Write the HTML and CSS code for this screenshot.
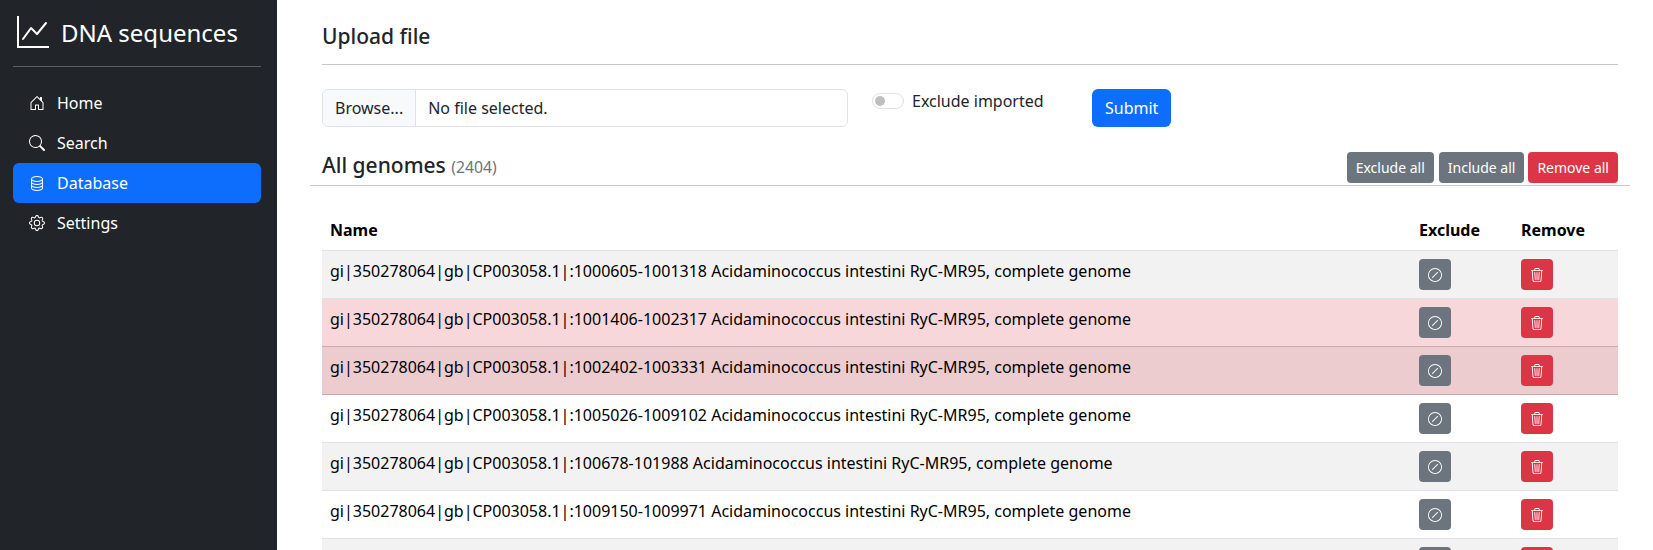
FILE: index.html
```html
<!DOCTYPE html>
<html lang="en">
<head>
    <meta charset="UTF-8">
    <title>DNA sequences</title>
    <link rel="stylesheet" href="styles.css">
</head>
<body>
    <div class="layout">
        <aside class="sidebar">
            <div class="brand">
                <svg class="brand-icon" viewBox="0 0 16 16" fill="currentColor"><path fill-rule="evenodd" d="M0 0h1v15h15v1H0V0Zm14.817 3.113a.5.5 0 0 1 .07.704l-4.5 5.5a.5.5 0 0 1-.74.037L7.06 6.767l-3.656 5.027a.5.5 0 0 1-.808-.588l4-5.5a.5.5 0 0 1 .758-.06l2.609 2.61 4.15-5.073a.5.5 0 0 1 .704-.07Z"/></svg>
                <span class="brand-name">DNA sequences</span>
            </div>
            <hr class="sidebar-rule">
            <nav class="nav">
                <a class="nav-link" href="#">
                    <svg class="nav-icon" viewBox="0 0 16 16" fill="currentColor"><path d="M8.354 1.146a.5.5 0 0 0-.708 0l-6 6A.5.5 0 0 0 1.5 7.5v7a.5.5 0 0 0 .5.5h4.5a.5.5 0 0 0 .5-.5v-4h2v4a.5.5 0 0 0 .5.5H14a.5.5 0 0 0 .5-.5v-7a.5.5 0 0 0-.146-.354L13 5.793V2.5a.5.5 0 0 0-.5-.5h-1a.5.5 0 0 0-.5.5v1.293L8.354 1.146zM2.5 14V7.707l5.5-5.5 5.5 5.5V14H10v-4a.5.5 0 0 0-.5-.5h-3a.5.5 0 0 0-.5.5v4H2.5z"/></svg>
                    Home
                </a>
                <a class="nav-link" href="#">
                    <svg class="nav-icon" viewBox="0 0 16 16" fill="currentColor"><path d="M11.742 10.344a6.5 6.5 0 1 0-1.397 1.398h-.001c.03.04.062.078.098.115l3.85 3.85a1 1 0 0 0 1.415-1.414l-3.85-3.85a1.007 1.007 0 0 0-.115-.1zM12 6.5a5.5 5.5 0 1 1-11 0 5.5 5.5 0 0 1 11 0z"/></svg>
                    Search
                </a>
                <a class="nav-link active" href="#">
                    <svg class="nav-icon" viewBox="0 0 16 16" fill="currentColor"><path d="M4.318 2.687C5.234 2.271 6.536 2 8 2s2.766.27 3.682.687C12.644 3.125 13 3.627 13 4c0 .374-.356.875-1.318 1.313C10.766 5.729 9.464 6 8 6s-2.766-.27-3.682-.687C3.356 4.875 3 4.373 3 4c0-.374.356-.875 1.318-1.313ZM13 5.698V7c0 .374-.356.875-1.318 1.313C10.766 8.729 9.464 9 8 9s-2.766-.27-3.682-.687C3.356 7.875 3 7.373 3 7V5.698c.271.202.58.378.904.525C4.978 6.711 6.427 7 8 7s3.022-.289 4.096-.777A4.92 4.92 0 0 0 13 5.698ZM14 4c0-1.007-.875-1.755-1.904-2.223C11.022 1.289 9.573 1 8 1s-3.022.289-4.096.777C2.875 2.245 2 2.993 2 4v9c0 1.007.875 1.755 1.904 2.223C4.978 15.711 6.427 16 8 16s3.022-.289 4.096-.777C13.125 14.755 14 14.007 14 13V4Zm-1 4.698V10c0 .374-.356.875-1.318 1.313C10.766 11.729 9.464 12 8 12s-2.766-.27-3.682-.687C3.356 10.875 3 10.373 3 10V8.698c.271.202.58.378.904.525C4.978 9.71 6.427 10 8 10s3.022-.289 4.096-.777A4.92 4.92 0 0 0 13 8.698Zm0 3V13c0 .374-.356.875-1.318 1.313C10.766 14.729 9.464 15 8 15s-2.766-.27-3.682-.687C3.356 13.875 3 13.373 3 13v-1.302c.271.202.58.378.904.525C4.978 12.71 6.427 13 8 13s3.022-.289 4.096-.777c.324-.147.633-.323.904-.525Z"/></svg>
                    Database
                </a>
                <a class="nav-link" href="#">
                    <svg class="nav-icon" viewBox="0 0 16 16" fill="currentColor"><path d="M8 4.754a3.246 3.246 0 1 0 0 6.492 3.246 3.246 0 0 0 0-6.492zM5.754 8a2.246 2.246 0 1 1 4.492 0 2.246 2.246 0 0 1-4.492 0z"/><path d="M9.796 1.343c-.527-1.79-3.065-1.79-3.592 0l-.094.319a.873.873 0 0 1-1.255.52l-.292-.16c-1.64-.892-3.433.902-2.54 2.541l.159.292a.873.873 0 0 1-.52 1.255l-.319.094c-1.79.527-1.79 3.065 0 3.592l.319.094a.873.873 0 0 1 .52 1.255l-.16.292c-.892 1.64.901 3.434 2.541 2.54l.292-.159a.873.873 0 0 1 1.255.52l.094.319c.527 1.79 3.065 1.79 3.592 0l.094-.319a.873.873 0 0 1 1.255-.52l.292.16c1.64.893 3.434-.902 2.54-2.541l-.159-.292a.873.873 0 0 1 .52-1.255l.319-.094c1.79-.527 1.79-3.065 0-3.592l-.319-.094a.873.873 0 0 1-.52-1.255l.16-.292c.893-1.64-.902-3.433-2.541-2.54l-.292.159a.873.873 0 0 1-1.255-.52l-.094-.319zm-2.633.283c.246-.835 1.428-.835 1.674 0l.094.319a1.873 1.873 0 0 0 2.693 1.115l.291-.16c.764-.415 1.6.42 1.184 1.185l-.159.292a1.873 1.873 0 0 0 1.116 2.692l.318.094c.835.246.835 1.428 0 1.674l-.319.094a1.873 1.873 0 0 0-1.115 2.693l.16.291c.415.764-.42 1.6-1.185 1.184l-.291-.159a1.873 1.873 0 0 0-2.693 1.116l-.094.318c-.246.835-1.428.835-1.674 0l-.094-.319a1.873 1.873 0 0 0-2.692-1.115l-.292.16c-.764.415-1.6-.42-1.184-1.185l.159-.291A1.873 1.873 0 0 0 1.945 8.93l-.319-.094c-.835-.246-.835-1.428 0-1.674l.319-.094A1.873 1.873 0 0 0 3.06 4.377l-.16-.292c-.415-.764.42-1.6 1.185-1.184l.292.159a1.873 1.873 0 0 0 2.692-1.115l.094-.319z"/></svg>
                    Settings
                </a>
            </nav>
        </aside>

        <main class="content">
            <h5 class="section-title">Upload file</h5>
            <hr class="rule">

            <form class="upload-form">
                <div class="file-input">
                    <span class="file-button">Browse...</span>
                    <span class="file-name">No file selected.</span>
                </div>
                <label class="switch">
                    <span class="switch-track"><span class="switch-knob"></span></span>
                    Exclude imported
                </label>
                <button class="btn btn-primary" type="button">Submit</button>
            </form>

            <div class="genomes-head">
                <h5 class="section-title genomes-title">All genomes <small class="count">(2404)</small></h5>
                <div class="head-buttons">
                    <button class="btn btn-sm btn-secondary" type="button">Exclude all</button>
                    <button class="btn btn-sm btn-secondary" type="button">Include all</button>
                    <button class="btn btn-sm btn-danger" type="button">Remove all</button>
                </div>
            </div>

            <table class="genomes">
                <thead>
                    <tr>
                        <th>Name</th>
                        <th class="col-exclude">Exclude</th>
                        <th class="col-remove">Remove</th>
                    </tr>
                </thead>
                <tbody id="rows"></tbody>
            </table>
        </main>
    </div>

    <script src="script.js"></script>
</body>
</html>
```

FILE: styles.css
```css
* {
    box-sizing: border-box;
}

html, body {
    height: 100%;
}

body {
    margin: 0;
    overflow: hidden;
    background-color: #fff;
    color: #212529;
    font-family: "Noto Sans", sans-serif;
    font-size: 16px;
    line-height: 1.5;
}

.layout {
    display: flex;
    height: 100%;
}

.sidebar {
    flex: 0 0 277px;
    padding: 16px 16px 16px 13px;
    background-color: #212529;
    color: #fff;
}

.brand {
    display: flex;
    align-items: center;
    height: 32px;
    padding-left: 4px;
    font-size: 24px;
}

.brand-icon {
    width: 32px;
    height: 32px;
    margin-right: 12px;
}

.brand-name {
    padding-top: 2px;
}

.sidebar-rule {
    margin: 18px 0 16px;
    border: 0;
    border-top: 1px solid #5c5f63;
}

.nav {
    display: flex;
    flex-direction: column;
}

.nav-link {
    display: flex;
    align-items: center;
    height: 40px;
    padding: 0 16px;
    border-radius: 6px;
    color: #fff;
    text-decoration: none;
}

.nav-link.active {
    background-color: #0d6efd;
}

.nav-icon {
    width: 16px;
    height: 16px;
    margin-right: 12px;
}

.content {
    flex: 1;
    min-width: 0;
    padding: 24px 35px 0 45px;
}

.section-title {
    margin: 0;
    font-size: 21px;
    font-weight: 500;
    line-height: 24px;
}

.genomes-title {
    padding-top: 1px;
}

.rule {
    margin: 16px 0 24px;
    border: 0;
    border-top: 1px solid #c8c8c8;
}

.upload-form {
    display: flex;
    align-items: flex-start;
}

.file-input {
    display: flex;
    width: 526px;
    height: 38px;
    border: 1px solid #dee2e6;
    border-radius: 6px;
    overflow: hidden;
}

.file-button {
    padding: 6px 12px;
    border-right: 1px solid #dee2e6;
    background-color: #f8f9fa;
}

.file-name {
    padding: 6px 12px;
}

.switch {
    display: flex;
    align-items: center;
    width: 220px;
    height: 24px;
    margin: 0 0 0 24px;
}

.switch-track {
    display: block;
    width: 32px;
    height: 16px;
    margin-right: 8px;
    padding: 2px;
    border: 1px solid #dee2e6;
    border-radius: 8px;
}

.switch-knob {
    display: block;
    width: 10px;
    height: 10px;
    border-radius: 50%;
    background-color: #bfbfbf;
}

.btn {
    display: inline-flex;
    align-items: center;
    justify-content: center;
    height: 38px;
    padding: 6px 12px;
    border: 1px solid transparent;
    border-radius: 6px;
    color: #fff;
    font-family: inherit;
    font-size: 16px;
    line-height: 1.5;
    cursor: pointer;
}

.btn-sm {
    height: 31px;
    padding: 4px 8px;
    border-radius: 4px;
    font-size: 14px;
}

.btn-primary {
    background-color: #0d6efd;
}

.btn-secondary {
    background-color: #6c757d;
}

.btn-danger {
    background-color: #dc3545;
}

.genomes-head {
    display: flex;
    align-items: flex-start;
    justify-content: space-between;
    margin: 25px -12px 24px;
    padding: 0 12px 2px;
    border-bottom: 1px solid #c8c8c8;
}

.head-buttons {
    display: flex;
    gap: 4px;
}

.head-buttons .btn:first-child {
    margin-right: 1px;
}

.count {
    color: #6c757d;
    font-size: 0.75em;
    font-weight: 400;
}

.genomes {
    width: 100%;
    border-collapse: collapse;
    color: #000;
}

.genomes th,
.genomes td {
    padding: 8px;
    border-bottom: 1px solid #dee2e6;
    text-align: left;
    vertical-align: top;
}

.genomes th {
    font-weight: 700;
}

.col-exclude {
    width: 102px;
}

.col-remove {
    width: 105px;
}

.row-striped td {
    background-color: #f2f2f2;
}

.row-danger td {
    border-bottom-color: #c6acae;
    background-color: #f8d7da;
}

.row-danger.row-striped td {
    background-color: #eccccf;
}

.icon-btn {
    width: 32px;
    padding: 0;
}

.icon-btn svg {
    width: 14px;
    height: 14px;
}

.btn-danger.icon-btn svg {
    margin-left: -1px;
}
```

FILE: script.js
```js
// last row is cut off by the window, only its buttons show
var genomes = [
    { range: "1000605-1001318", excluded: false },
    { range: "1001406-1002317", excluded: true },
    { range: "1002402-1003331", excluded: true },
    { range: "1005026-1009102", excluded: false },
    { range: "100678-101988", excluded: false },
    { range: "1009150-1009971", excluded: false },
    { range: null, excluded: false }
];

var slashIcon = '<svg viewBox="0 0 16 16" fill="currentColor"><path d="M8 15A7 7 0 1 1 8 1a7 7 0 0 1 0 14zm0 1A8 8 0 1 0 8 0a8 8 0 0 0 0 16z"/><path d="M11.354 4.646a.5.5 0 0 0-.708 0l-6 6a.5.5 0 0 0 .708.708l6-6a.5.5 0 0 0 0-.708z"/></svg>';
var trashIcon = '<svg viewBox="0 0 16 16" fill="currentColor"><path d="M6.5 1h3a.5.5 0 0 1 .5.5v1H6v-1a.5.5 0 0 1 .5-.5ZM11 2.5v-1A1.5 1.5 0 0 0 9.5 0h-3A1.5 1.5 0 0 0 5 1.5v1H2.506a.58.58 0 0 0-.01 0H1.5a.5.5 0 0 0 0 1h.538l.853 10.66A2 2 0 0 0 4.885 16h6.23a2 2 0 0 0 1.994-1.84l.853-10.66h.538a.5.5 0 0 0 0-1h-.995a.59.59 0 0 0-.01 0H11Zm1.958 1-.846 10.58a1 1 0 0 1-.997.92h-6.23a1 1 0 0 1-.997-.92L3.042 3.5h9.916Zm-7.487 1a.5.5 0 0 1 .528.47l.5 8.5a.5.5 0 0 1-.998.06L5 5.03a.5.5 0 0 1 .47-.53Zm5.058 0a.5.5 0 0 1 .47.53l-.5 8.5a.5.5 0 1 1-.998-.06l.5-8.5a.5.5 0 0 1 .528-.47ZM8 4.5a.5.5 0 0 1 .5.5v8.5a.5.5 0 0 1-1 0V5a.5.5 0 0 1 .5-.5Z"/></svg>';

var rows = document.getElementById("rows");

genomes.forEach(function (genome, i) {
    var tr = document.createElement("tr");
    var name = genome.range ? "gi|350278064|gb|CP003058.1|:" + genome.range + " Acidaminococcus intestini RyC-MR95, complete genome" : "";
    if (i % 2 === 0) tr.classList.add("row-striped");
    if (genome.excluded) tr.classList.add("row-danger");
    tr.innerHTML =
        "<td>" + name + "</td>" +
        '<td><button class="btn btn-sm btn-secondary icon-btn" type="button">' + slashIcon + "</button></td>" +
        '<td><button class="btn btn-sm btn-danger icon-btn" type="button">' + trashIcon + "</button></td>";
    rows.appendChild(tr);
});
```
